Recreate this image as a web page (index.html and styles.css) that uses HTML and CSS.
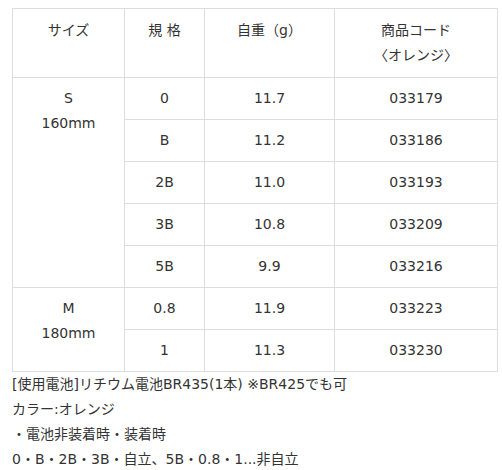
FILE: index.html
```html
<!DOCTYPE html>
<html lang="ja">
<head>
<meta charset="utf-8">
<link rel="stylesheet" href="styles.css">
</head>
<body>
<table class="spec">
  <colgroup>
    <col class="c1"><col class="c2"><col class="c3"><col class="c4">
  </colgroup>
  <thead>
    <tr>
      <th>サイズ</th>
      <th>規 格</th>
      <th>自重（g）</th>
      <th>商品コード<br>〈オレンジ〉</th>
    </tr>
  </thead>
  <tbody>
    <tr><td rowspan="5">S<br>160mm</td><td>0</td><td>11.7</td><td>033179</td></tr>
    <tr><td>B</td><td>11.2</td><td>033186</td></tr>
    <tr><td>2B</td><td>11.0</td><td>033193</td></tr>
    <tr><td>3B</td><td>10.8</td><td>033209</td></tr>
    <tr><td>5B</td><td>9.9</td><td>033216</td></tr>
    <tr><td rowspan="2">M<br>180mm</td><td>0.8</td><td>11.9</td><td>033223</td></tr>
    <tr><td>1</td><td>11.3</td><td>033230</td></tr>
  </tbody>
</table>
<div class="notes">
  <p>[使用電池]リチウム電池BR435(1本) ※BR425でも可</p>
  <p>カラー:オレンジ</p>
  <p>・電池非装着時・装着時</p>
  <p>0・B・2B・3B・自立、5B・0.8・1...非自立</p>
</div>
</body>
</html>
```

FILE: styles.css
```css
html, body {
  margin: 0;
  padding: 0;
  background: #fff;
}
body {
  padding: 8px 0 0 12px;
  font-family: "DejaVu Sans", "Noto Sans CJK JP", sans-serif;
  font-size: 14px;
  line-height: 25px;
  color: #333;
}
.spec {
  border-collapse: collapse;
  table-layout: fixed;
  width: 485px;
}
.c1 { width: 112px; }
.c2 { width: 80px; }
.c3 { width: 130px; }
.c4 { width: 163px; }
.spec th,
.spec td {
  border: 1px solid #dddddd;
  padding: 8px 4px;
  text-align: center;
  vertical-align: top;
  font-weight: normal;
  box-sizing: content-box;
}
.spec th { padding: 9px 4px; }
.spec td { height: 25px; }
.notes p {
  margin: 0;
  white-space: nowrap;
}
```
